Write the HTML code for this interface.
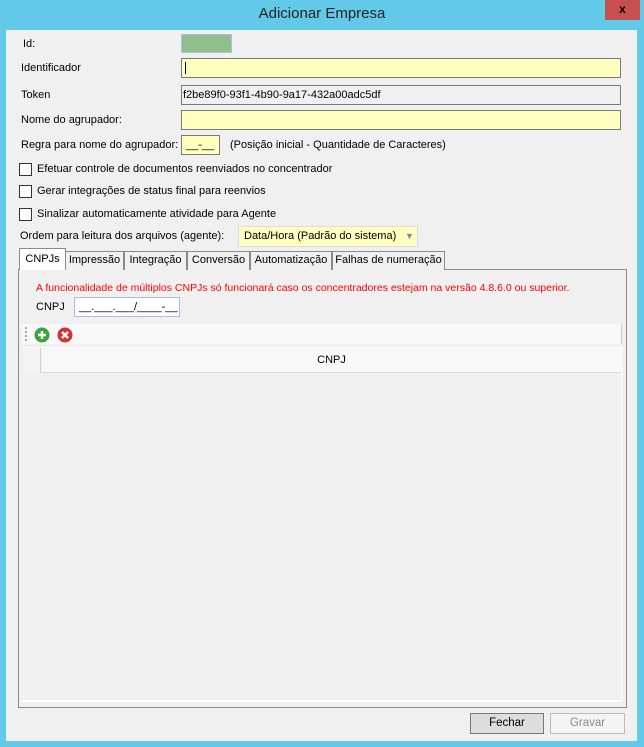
<!DOCTYPE html>
<html><head><style>
*{margin:0;padding:0;box-sizing:border-box}
body{width:644px;height:747px;background:#62c9e9;font-family:"Liberation Sans",sans-serif;font-size:11px;color:#000;position:relative;overflow:hidden}
.a{position:absolute;white-space:nowrap}
.win{position:absolute;left:6px;top:30px;width:631px;height:711px;background:#f0f0f0}
.inp{position:absolute;border:1px solid #7a7a7a;background:#ffffc0}
.cb{position:absolute;width:13px;height:13px;border:1px solid #333;background:#fff}
.tab{position:absolute;top:251px;height:19px;border:1px solid #8a8a8a;border-bottom:none;background:#f0f0f0;font-size:11px;text-align:center;line-height:17px;white-space:nowrap;overflow:hidden}
.btn{position:absolute;height:21px;border:1px solid #777;background:#dddddd;text-align:center;line-height:19px;font-size:11.5px}
</style></head><body>
<div class="a" style="left:0;top:5px;width:644px;text-align:center;font-size:15px;color:#222">Adicionar Empresa</div>
<div class="a" style="left:605px;top:0;width:35px;height:20px;background:#c75050;color:#000;font-weight:bold;text-align:center;line-height:18px;font-size:12px">x</div>
<div class="win"></div>
<div class="a" style="left:23px;top:38px">Id:</div>
<div class="a" style="left:181px;top:34px;width:51px;height:19px;background:#8fbf8c;border:1px solid #a8c4dc"></div>
<div class="a" style="left:21px;top:62px">Identificador</div>
<div class="inp" style="left:181px;top:58px;width:440px;height:20px"><div class="a" style="left:3px;top:3px;width:1px;height:12px;background:#000"></div></div>
<div class="a" style="left:21px;top:89px">Token</div>
<div class="inp" style="left:181px;top:85px;width:440px;height:20px;background:#f0f0f0;padding:3px 0 0 1px">f2be89f0-93f1-4b90-9a17-432a00adc5df</div>
<div class="a" style="left:21px;top:114px">Nome do agrupador:</div>
<div class="inp" style="left:181px;top:110px;width:440px;height:20px"></div>
<div class="a" style="left:21px;top:139px">Regra para nome do agrupador:</div>
<div class="inp" style="left:181px;top:135px;width:39px;height:20px;padding:3px 0 0 4px">__-__</div>
<div class="a" style="left:230px;top:139px">(Posição inicial - Quantidade de Caracteres)</div>
<div class="cb" style="left:19px;top:163px"></div><div class="a" style="left:37px;top:163px">Efetuar controle de documentos reenviados no concentrador</div>
<div class="cb" style="left:19px;top:185px"></div><div class="a" style="left:37px;top:185px">Gerar integrações de status final para reenvios</div>
<div class="cb" style="left:19px;top:208px"></div><div class="a" style="left:37px;top:208px">Sinalizar automaticamente atividade para Agente</div>
<div class="a" style="left:20px;top:230px">Ordem para leitura dos arquivos (agente):</div>
<div class="a" style="left:238px;top:226px;width:180px;height:21px;background:#ffffc0;border:1px solid #dcdcdc;padding:3px 0 0 5px">Data/Hora (Padrão do sistema)<span class="a" style="left:166px;top:4px;color:#6c8cb0;font-size:9px">▼</span></div>
<div class="a" style="left:18px;top:269px;width:609px;height:439px;border:1px solid #8a8a8a;background:#f0f0f0"></div>
<div class="tab" style="left:19px;top:248px;height:22px;width:47px;background:#fff;line-height:20px;z-index:2">CNPJs</div>
<div class="tab" style="left:65px;width:59px">Impressão</div>
<div class="tab" style="left:124px;width:63px">Integração</div>
<div class="tab" style="left:187px;width:63px">Conversão</div>
<div class="tab" style="left:250px;width:82px">Automatização</div>
<div class="tab" style="left:332px;width:113px">Falhas de numeração</div>
<div class="a" style="left:36px;top:282px;color:#f00;font-size:10.5px">A funcionalidade de múltiplos CNPJs só funcionará caso os concentradores estejam na versão 4.8.6.0 ou superior.</div>
<div class="a" style="left:36px;top:301px">CNPJ</div>
<div class="a" style="left:74px;top:297px;width:106px;height:20px;background:#fff;border:1px solid #a9c0dc;padding:3px 0 0 4px">__.___.___/____-__</div>
<div class="a" style="left:22px;top:324px;width:600px;height:20px;background:#f8f8f8;border-right:1px solid #ccc"></div>
<div class="a" style="left:25px;top:327px;width:2px;height:14px;border-left:2px dotted #aaa"></div>
<svg class="a" style="left:34px;top:327px" width="16" height="16"><circle cx="8" cy="8" r="7.5" fill="#3aa33a"/><path d="M8 4v8M4 8h8" stroke="#fff" stroke-width="2.5"/></svg>
<svg class="a" style="left:57px;top:327px" width="16" height="16"><circle cx="8" cy="8" r="7.5" fill="#d83030"/><path d="M5 5l6 6M11 5l-6 6" stroke="#fff" stroke-width="2.5"/></svg>
<div class="a" style="left:22px;top:347px;width:600px;height:354px;background:#f0f0f0;border:1px solid #fff;border-width:1px 1px 0 0"></div>
<div class="a" style="left:23px;top:348px;width:18px;height:25px;background:#f4f4f4;border-right:1px solid #d0d0d0"></div>
<div class="a" style="left:42px;top:348px;width:579px;height:25px;background:#f8f8f8;border-bottom:1px solid #d8d8d8;text-align:center;line-height:24px">CNPJ</div>
<div class="a" style="left:22px;top:700px;width:600px;height:2px;background:#fff"></div>
<div class="btn" style="left:470px;top:713px;width:74px">Fechar</div>
<div class="btn" style="left:550px;top:713px;width:75px;background:#f4f4f4;border-color:#bcbcbc;color:#888">Gravar</div>
</body></html>
